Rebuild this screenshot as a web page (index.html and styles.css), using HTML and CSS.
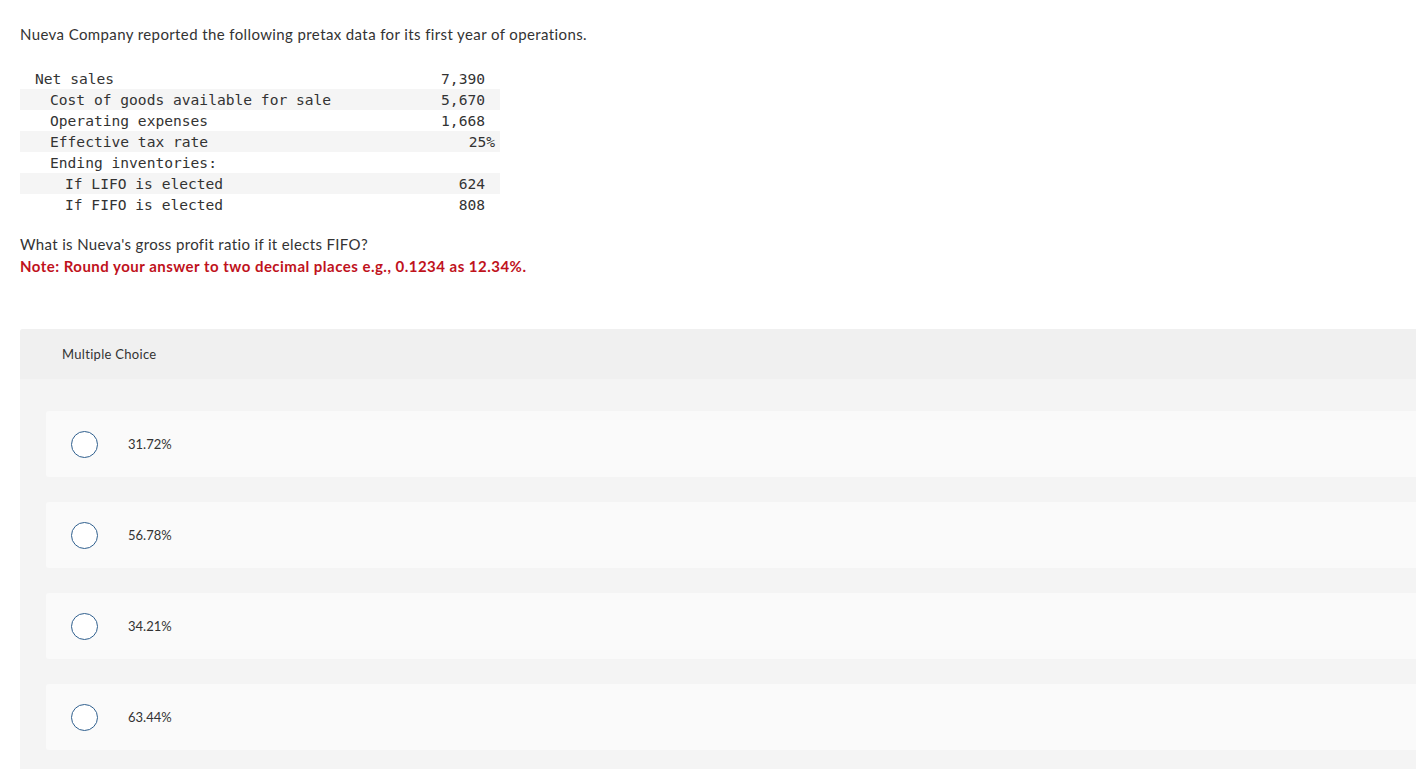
FILE: index.html
```html
<!DOCTYPE html>
<html lang="en">
<head>
<meta charset="utf-8">
<title>Nueva Company</title>
<link rel="stylesheet" href="styles.css">
</head>
<body>
<div class="page">
  <p class="intro">Nueva Company reported the following pretax data for its first year of operations.</p>
  <table class="data">
    <tbody>
      <tr><td class="l0">Net sales</td><td class="num">7,390<span class="pad"></span></td></tr>
      <tr class="alt"><td class="l1">Cost of goods available for sale</td><td class="num">5,670<span class="pad"></span></td></tr>
      <tr><td class="l1">Operating expenses</td><td class="num">1,668<span class="pad"></span></td></tr>
      <tr class="alt"><td class="l1">Effective tax rate</td><td class="num">25%</td></tr>
      <tr><td class="l1">Ending inventories:</td><td class="num"></td></tr>
      <tr class="alt"><td class="l2">If LIFO is elected</td><td class="num">624<span class="pad"></span></td></tr>
      <tr><td class="l2">If FIFO is elected</td><td class="num">808<span class="pad"></span></td></tr>
    </tbody>
  </table>
  <p class="question">What is Nueva's gross profit ratio if it elects FIFO?</p>
  <p class="note">Note: Round your answer to two decimal places e.g., 0.1234 as 12.34%.</p>

  <div class="panel">
    <div class="panel-head">Multiple Choice</div>
    <div class="panel-body">
      <div class="option"><span class="radio"></span><span class="opt-text">31.72%</span></div>
      <div class="option"><span class="radio"></span><span class="opt-text">56.78%</span></div>
      <div class="option"><span class="radio"></span><span class="opt-text">34.21%</span></div>
      <div class="option"><span class="radio"></span><span class="opt-text">63.44%</span></div>
    </div>
  </div>
</div>
</body>
</html>
```

FILE: styles.css
```css
html, body {
  margin: 0;
  padding: 0;
  background: #ffffff;
}
body {
  font-family: Lato, "Open Sans", Arial, sans-serif;
  color: #333333;
  overflow: hidden;
}
.page {
  padding: 24px 0 0 20px;
}
.intro {
  margin: 0;
  font-size: 15px;
  line-height: 20px;
  letter-spacing: 0.39px;
}
.data {
  margin-top: 24px;
  border-collapse: collapse;
  width: 480px;
  font-family: "DejaVu Sans Mono", "Liberation Mono", monospace;
  font-size: 14.6px;
  color: #333333;
}
.data td {
  height: 21px;
  padding: 0;
  line-height: 21px;
  white-space: pre;
}
.data td > * { vertical-align: baseline; }
.data tr td { padding-top: 1px !important; height: 20px; line-height: 20px; }
.data tr.alt td {
  background: #f5f5f5;
}
.l0 { padding-left: 15px !important; }
.l1 { padding-left: 30px !important; }
.l2 { padding-left: 45px !important; }
.num {
  text-align: right;
  padding-right: 5px !important;
}
.pad {
  display: inline-block;
  width: 10px;
}
.question {
  margin: 18px 0 0;
  font-size: 15px;
  line-height: 22px;
  letter-spacing: 0.35px;
}
.note {
  margin: 0;
  font-size: 15px;
  line-height: 22px;
  font-weight: bold;
  letter-spacing: 0.48px;
  color: #c0121c;
}
.panel {
  margin-top: 52px;
  border-top-left-radius: 3px;
  overflow: hidden;
  background: #f4f4f4;
  height: 460px;
}
.panel-head {
  height: 50px;
  background: #f0f0f0;
  display: flex;
  align-items: center;
  padding-left: 42px;
  font-size: 13px;
  letter-spacing: 0.3px;
  color: #333333;
}
.panel-body {
  padding: 32px 0 0 26px;
  display: flex;
  flex-direction: column;
  gap: 25px;
}
.option {
  height: 66px;
  background: #fafafa;
  border-radius: 3px 0 0 3px;
  display: flex;
  align-items: center;
  padding-left: 25px;
}
.radio {
  width: 25px;
  height: 25px;
  border: 1.3px solid #2f5f8e;
  border-radius: 50%;
  background: #ffffff;
  flex: none;
}
.opt-text {
  margin-left: 30px;
  font-size: 13px;
  color: #333333;
}
```
